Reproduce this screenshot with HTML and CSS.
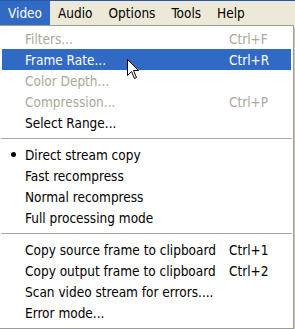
FILE: index.html
```html
<!DOCTYPE html>
<html lang="en">
<head>
    <meta charset="UTF-8">
    <title>Video menu</title>
    <link rel="stylesheet" href="styles.css">
</head>
<body>
    <div class="menubar">
        <span class="menubar-item open">Video</span>
        <span class="menubar-item">Audio</span>
        <span class="menubar-item">Options</span>
        <span class="menubar-item">Tools</span>
        <span class="menubar-item">Help</span>
    </div>

    <div class="dropdown">
        <div class="item disabled"><span class="label">Filters...</span><span class="key">Ctrl+F</span></div>
        <div class="item active"><span class="label">Frame Rate...</span><span class="key">Ctrl+R</span></div>
        <div class="item disabled"><span class="label">Color Depth...</span></div>
        <div class="item disabled"><span class="label">Compression...</span><span class="key">Ctrl+P</span></div>
        <div class="item"><span class="label">Select Range...</span></div>
        <div class="separator"></div>
        <div class="item checked"><span class="label">Direct stream copy</span></div>
        <div class="item"><span class="label">Fast recompress</span></div>
        <div class="item"><span class="label">Normal recompress</span></div>
        <div class="item"><span class="label">Full processing mode</span></div>
        <div class="separator"></div>
        <div class="item"><span class="label">Copy source frame to clipboard</span><span class="key">Ctrl+1</span></div>
        <div class="item"><span class="label">Copy output frame to clipboard</span><span class="key">Ctrl+2</span></div>
        <div class="item"><span class="label">Scan video stream for errors....</span></div>
        <div class="item"><span class="label">Error mode...</span></div>

        <svg class="cursor" width="13" height="21" viewBox="0 0 13 21">
            <path d="M0.5 0.5 L0.5 16.5 L4.5 12.5 L7.5 19.5 L9.5 18.5 L6.5 11.5 L11.5 11.5 Z" fill="#fff" stroke="#000" stroke-width="1"/>
        </svg>
    </div>
</body>
</html>
```

FILE: styles.css
```css
:root {
    --xp-face: #ece9d8;
    --xp-blue: #316ac5;
    --xp-gray: #aca899;
    --xp-border: #9d9d92;
}

* {
    box-sizing: border-box;
    margin: 0;
    padding: 0;
}

body {
    font-family: "DejaVu Sans Condensed", "DejaVu Sans", sans-serif;
    font-stretch: condensed;
    font-size: 13.5px;
    background-color: #fff;
    color: #000;
    width: 295px;
    height: 329px;
    overflow: hidden;
}

.menubar {
    display: flex;
    height: 25px;
    background-color: var(--xp-face);
    border-top: 1px solid #2a55a8;
}

.menubar-item {
    display: flex;
    align-items: center;
    padding: 0 8px;
    height: 24px;
}

.menubar-item.open {
    background-color: var(--xp-blue);
    color: #fff;
}

.dropdown {
    position: relative;
    width: 295px;
    height: 304px;
    padding: 2px 0;
    border: 1px solid var(--xp-border);
    border-left: none;
    border-right-width: 1px;
    margin-right: 1px;
    background-color: #fff;
    box-shadow: 1px 2px 0 #c8c6bc;
    width: 294px;
}

.item {
    display: flex;
    align-items: center;
    height: 21px;
    padding-left: 23px;
    margin: 0 2px;
    position: relative;
}

.item .label {
    flex: 0 0 204px;
    white-space: nowrap;
}

.item .key {
    white-space: nowrap;
}

.item.disabled {
    color: var(--xp-gray);
}

.item.active {
    background-color: var(--xp-blue);
    color: #fff;
}

.item.checked::before {
    content: "";
    position: absolute;
    left: 9px;
    top: 8px;
    width: 5px;
    height: 5px;
    border-radius: 50%;
    background-color: #000;
}

.separator {
    height: 11px;
    display: flex;
    align-items: center;
    margin: 0 1px;
}

.separator::after {
    content: "";
    flex: 1;
    height: 1px;
    background-color: var(--xp-gray);
}

.cursor {
    position: absolute;
    left: 127px;
    top: 33px;
}
```
